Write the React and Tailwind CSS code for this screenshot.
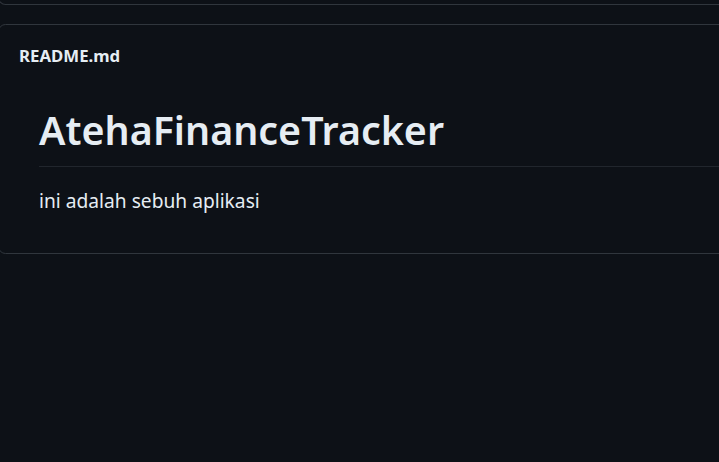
import React from 'react';

export default function App() {
  return (
    <div
      className="w-[719px] h-[462px] overflow-hidden bg-[#0d1117] text-[#e6edf3]"
      style={{ fontFamily: '"Noto Sans", "Liberation Sans", sans-serif' }}
    >
      <div className="ml-[-2px] w-[760px]">
        {/* tail of the box above */}
        <div className="h-[4px] mt-[-8px] box-content pt-[8px] border border-t-0 border-[#30363d] rounded-b-[7.5px]" />

        <div className="mt-[19px] border border-[#30363d] rounded-[7.5px]">
          <div className="pt-[19px] pl-[20px] h-[44px] text-[16.8px] leading-[24px] font-bold">
            README.md
          </div>
          <article className="pt-[36px] pb-[37px] pl-[40px]">
            <h1 className="text-[39.4px] leading-[50px] font-semibold pb-[11px] border-b border-[#21262d]">
              AtehaFinanceTracker
            </h1>
            <p className="mt-[19px] text-[19.2px] leading-[30px]">ini adalah sebuh aplikasi</p>
          </article>
        </div>
      </div>
    </div>
  );
}
